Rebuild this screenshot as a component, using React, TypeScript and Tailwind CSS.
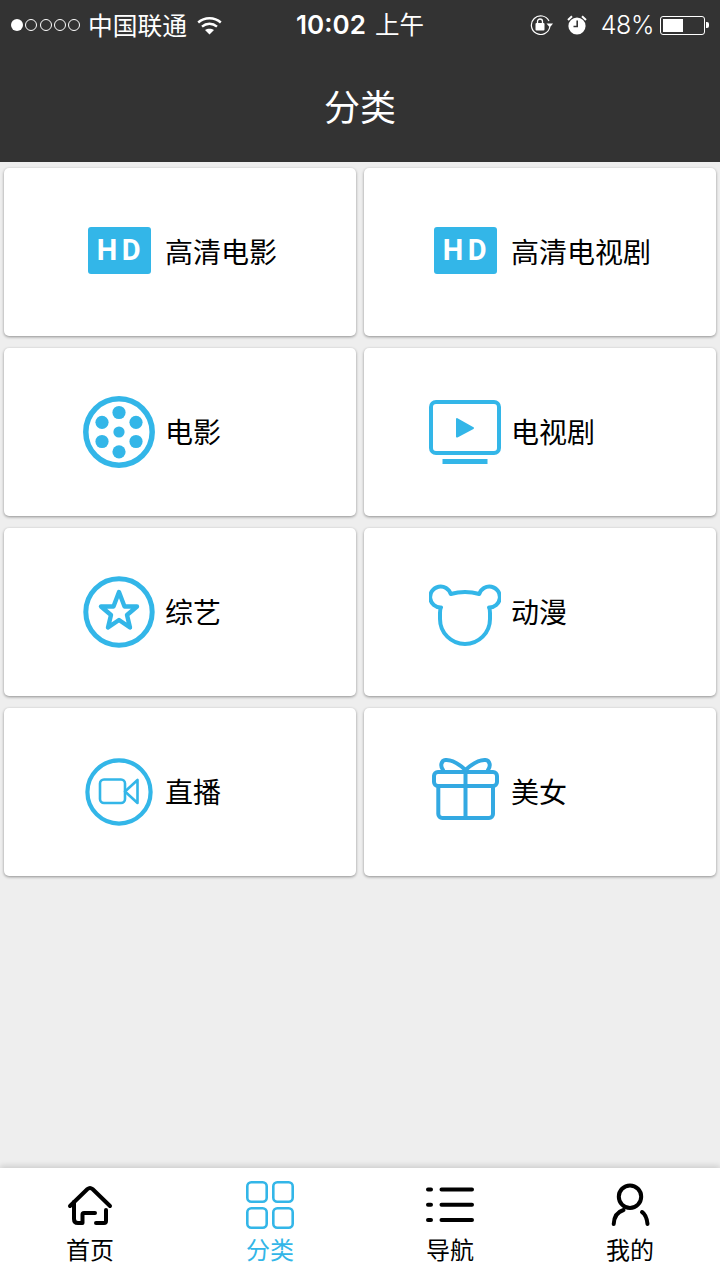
import React from "react";

const cjk = "font-['Noto_Sans_CJK_SC','Noto_Sans',sans-serif]";

const FilmIcon = () => (
  <svg width="72" height="72" viewBox="0 0 72 72" fill="#33b6e8">
    <circle cx="36" cy="36" r="33.2" fill="none" stroke="#33b6e8" strokeWidth="5.5" />
    <circle cx="36" cy="16.5" r="6.6" />
    <circle cx="36" cy="55.8" r="6.6" />
    <circle cx="19" cy="26.3" r="6.6" />
    <circle cx="53" cy="26.3" r="6.6" />
    <circle cx="19" cy="45.5" r="6.6" />
    <circle cx="53" cy="45.5" r="6.6" />
    <circle cx="36" cy="36" r="5.6" />
  </svg>
);

const TvIcon = () => (
  <svg width="72" height="72" viewBox="0 0 72 72" fill="none">
    <rect x="2" y="6" width="68" height="51" rx="5" stroke="#33b6e8" strokeWidth="4" />
    <rect x="13.5" y="63" width="45" height="5" fill="#33b6e8" />
    <path d="M28 23 L44 32 L28 40.5 Z" fill="#33b6e8" stroke="#33b6e8" strokeWidth="2" strokeLinejoin="round" />
  </svg>
);

const StarIcon = () => (
  <svg width="72" height="72" viewBox="0 0 72 72" fill="none" stroke="#33b6e8">
    <circle cx="36" cy="36" r="33.2" strokeWidth="5" />
    <path
      d="M36 16 L41.5 30.5 L54 30.5 L44 39 L47 51.5 L36 44 L25 51.5 L28 39 L18 30.5 L30.5 30.5 Z"
      strokeWidth="4.4"
      strokeLinejoin="round"
    />
  </svg>
);

const BearIcon = () => (
  <svg width="72" height="72" viewBox="0 0 72 72" fill="none">
    <path
      d="M21.7 18 Q36 14 50.3 18 A10.5 10.5 0 1 1 60 31.5 Q61 33 61 37 V43 A25 25 0 0 1 11 43 V37 Q11 33 12 31.5 A10.5 10.5 0 1 1 21.7 18 Z"
      stroke="#33b6e8"
      strokeWidth="4"
      strokeLinejoin="round"
    />
  </svg>
);

const VideoIcon = () => (
  <svg width="72" height="72" viewBox="0 0 72 72" fill="none" stroke="#33b6e8" strokeLinejoin="round">
    <circle cx="36" cy="36" r="31.6" strokeWidth="4.2" />
    <rect x="17" y="23.5" width="25" height="23.5" rx="4" strokeWidth="2.6" />
    <path d="M42 35.5 L54.5 24 V47 Z" strokeWidth="2.6" />
  </svg>
);

const GiftIcon = () => (
  <svg width="72" height="72" viewBox="0 0 72 72" fill="none" stroke="#33a9e2" strokeWidth="4" strokeLinecap="round" strokeLinejoin="round">
    <rect x="5" y="16" width="63" height="14" rx="4" />
    <path d="M9.3 30 V58 a4 4 0 0 0 4 4 H60 a4 4 0 0 0 4 -4 V30" />
    <path d="M36.5 16 V62" />
    <path d="M36.5 14 C30 8 22 3.5 16.5 4 C12 4.5 11 10 14 14" />
    <path d="M36.5 14 C43 8 51 3.5 56.5 4 C61 4.5 62 10 59 14" />
  </svg>
);

const HdIcon = () => (
  <div className="w-[72px] flex justify-center pl-[1px] pb-[3px]">
    <div className="w-[63px] h-[47px] rounded-[3px] bg-[#33b6e8] flex items-center justify-center pl-[3px] text-white text-[29px] font-bold tracking-[4.5px] font-['Roboto',sans-serif]">
      HD
    </div>
  </div>
);

const HomeIcon = () => (
  <svg width="48" height="48" viewBox="0 0 48 48" fill="none" stroke="#000" strokeWidth="4" strokeLinecap="round" strokeLinejoin="round">
    <path d="M4 25 L21.5 8 Q24 6 26.5 8 L44 25" />
    <path d="M8 21 V38 Q8 42 12 42 H16.5 V33.5 Q16.5 32 18 32 H29" />
    <path d="M40 29 V40 Q40 42 38 42 H30" />
  </svg>
);

const GridIcon = () => (
  <svg width="48" height="48" viewBox="0 0 48 48" fill="none" stroke="#33b6e8" strokeWidth="2.6">
    <rect x="1.3" y="1.3" width="19.4" height="19.4" rx="4" />
    <rect x="27.3" y="1.3" width="19.4" height="19.4" rx="4" />
    <rect x="1.3" y="27.3" width="19.4" height="19.4" rx="4" />
    <rect x="27.3" y="27.3" width="19.4" height="19.4" rx="4" />
  </svg>
);

const ListIcon = () => (
  <svg width="48" height="48" viewBox="0 0 48 48" fill="none" stroke="#000" strokeWidth="4" strokeLinecap="round">
    <path d="M2 8.5 H5 M15.5 8.5 H46" />
    <path d="M2 23.7 H5 M15.5 23.7 H46" />
    <path d="M2 39 H5 M15.5 39 H46" />
  </svg>
);

const UserIcon = () => (
  <svg width="48" height="48" viewBox="0 0 48 48" fill="none" stroke="#000" strokeWidth="4" strokeLinecap="round">
    <circle cx="24" cy="15.7" r="11.2" />
    <path d="M17.5 29 C11 31 8 37 7.7 43" />
    <path d="M36 31 C39 33 41 38 41.5 43" />
  </svg>
);

const WifiIcon = () => (
  <svg width="25" height="19" viewBox="0 0 25 19" fill="none" stroke="#fff" strokeWidth="2.4">
    <path d="M1.2 6.5 C7.5 0.8 17.5 0.8 23.8 6.5" />
    <path d="M5 10.6 C9.5 6.8 15.5 6.8 20 10.6" />
    <path d="M12.5 18.5 L8 14 C10.5 12.2 14.5 12.2 17 14 Z" fill="#fff" stroke="none" />
  </svg>
);

const RotationLockIcon = () => (
  <svg width="24" height="20" viewBox="0 0 24 20" fill="none">
    <path d="M19.8 12 A9.3 9.3 0 1 1 19 6" stroke="#fff" strokeWidth="1.2" />
    <path d="M16.5 8.5 H23 L19.8 12.5 Z" fill="#fff" />
    <rect x="5.5" y="8" width="9" height="7.5" rx="1" fill="#fff" />
    <path d="M7.5 8 V6.5 A2.5 2.5 0 0 1 12.5 6.5 V8" stroke="#fff" strokeWidth="1.3" />
  </svg>
);

const AlarmIcon = () => (
  <svg width="20" height="20" viewBox="0 0 20 20">
    <circle cx="10" cy="11" r="8.6" fill="#fff" />
    <path d="M1 5 L5 1.2 M19 5 L15 1.2" stroke="#fff" strokeWidth="2" />
    <path d="M10.2 5.5 V11.5 H6.5" fill="none" stroke="#333" strokeWidth="1.6" />
  </svg>
);

const BatteryIcon = () => (
  <div className="flex items-center">
    <div className="w-[45px] h-[19px] rounded-[3px] border border-white p-[2px]">
      <div className="w-[20px] h-full bg-white" />
    </div>
    <div className="w-[3px] h-[6px] ml-[1px] bg-white rounded-r-[2px]" />
  </div>
);

const categories = [
  { label: "高清电影", icon: <HdIcon />, textWidth: "w-[112px]" },
  { label: "高清电视剧", icon: <HdIcon />, textWidth: "w-[140px]" },
  { label: "电影", icon: <FilmIcon />, textWidth: "w-[112px]" },
  { label: "电视剧", icon: <TvIcon />, textWidth: "w-[140px]" },
  { label: "综艺", icon: <StarIcon />, textWidth: "w-[112px]" },
  { label: "动漫", icon: <BearIcon />, textWidth: "w-[140px]" },
  { label: "直播", icon: <VideoIcon />, textWidth: "w-[112px]" },
  { label: "美女", icon: <GiftIcon />, textWidth: "w-[140px]" },
];

const tabs = [
  { label: "首页", icon: <HomeIcon />, active: false },
  { label: "分类", icon: <GridIcon />, active: true },
  { label: "导航", icon: <ListIcon />, active: false },
  { label: "我的", icon: <UserIcon />, active: false },
];

export default function App() {
  return (
    <div className={`w-[720px] h-[1280px] flex flex-col bg-[#eeeeee] overflow-hidden ${cjk}`}>
      {/* Header */}
      <div className="bg-[#333333] text-white">
        <div className="h-[50px] px-[11px] grid grid-cols-[1fr_auto_1fr] items-center">
          <div className="flex items-center">
            <div className="flex items-center gap-[2.25px]">
              <div className="w-[12px] h-[12px] rounded-full bg-white" />
              <div className="w-[12px] h-[12px] rounded-full border border-white" />
              <div className="w-[12px] h-[12px] rounded-full border border-white" />
              <div className="w-[12px] h-[12px] rounded-full border border-white" />
              <div className="w-[12px] h-[12px] rounded-full border border-white" />
            </div>
            <span className="ml-[8px] pb-[2px] text-[24.75px] leading-[30px]">中国联通</span>
            <div className="ml-[10px]">
              <WifiIcon />
            </div>
          </div>
          <div className="flex items-center gap-[9px]">
            <span className="text-[26px] font-semibold font-['Inter',sans-serif] leading-[30px]">10:02</span>
            <span className="pb-[2px] text-[24.5px] leading-[30px]">上午</span>
          </div>
          <div className="flex items-center justify-end">
            <RotationLockIcon />
            <div className="ml-[13px]">
              <AlarmIcon />
            </div>
            <span className="ml-[14px] text-[25px] tracking-[-0.4px] font-['Inter',sans-serif] font-light leading-[30px]">48%</span>
            <div className="ml-[6px]">
              <BatteryIcon />
            </div>
          </div>
        </div>
        <div className="h-[112px] flex items-center justify-center pb-[2px] text-[36px]">分类</div>
      </div>

      {/* Categories */}
      <div className="flex-1 grid grid-cols-2 gap-x-[8px] gap-y-[12px] px-[4px] pt-[6px] auto-rows-[168px] content-start">
        {categories.map((item) => (
          <div
            key={item.label}
            className="bg-white rounded-[5px] shadow-[0_1px_3px_rgba(0,0,0,0.4)] flex items-center justify-center gap-[10px]"
          >
            {item.icon}
            <span className={`${item.textWidth} pb-[2px] text-[28px] leading-[36px] text-black`}>{item.label}</span>
          </div>
        ))}
      </div>

      {/* Tab bar */}
      <div className="h-[112px] bg-white grid grid-cols-4 pt-[13px] shadow-[0_-2px_6px_rgba(0,0,0,0.15)]">
        {tabs.map((tab) => (
          <div key={tab.label} className="flex flex-col items-center">
            {tab.icon}
            <span
              className={`mt-[2px] text-[24px] leading-[36px] ${tab.active ? "text-[#33b6e8]" : "text-black"}`}
            >
              {tab.label}
            </span>
          </div>
        ))}
      </div>
    </div>
  );
}
